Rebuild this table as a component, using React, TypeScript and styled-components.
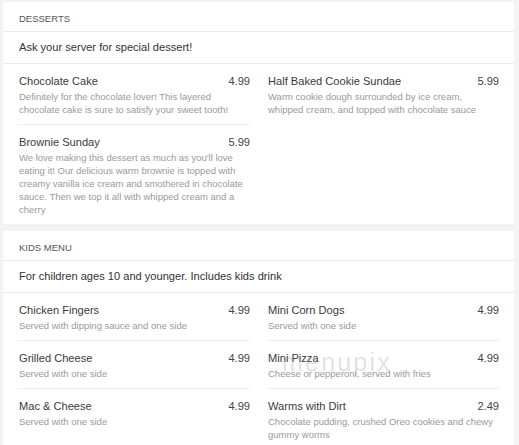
import React from "react";
import styled, { createGlobalStyle } from "styled-components";

const GlobalStyle = createGlobalStyle`
  html, body {
    margin: 0;
    padding: 0;
    background: #f3f3f5;
    font-family: "Liberation Sans", Arial, sans-serif;
  }
`;

const Page = styled.div`
  padding: 2px 5px 0 3px;
  display: flex;
  flex-direction: column;
  gap: 7px;
`;

const Card = styled.section`
  position: relative;
  background: #ffffff;
`;

const Header = styled.div`
  height: 30px;
  padding: 10px 15px 0 16px;
  box-sizing: border-box;
  font-size: 9.5px;
  line-height: 13px;
  color: #555;
  text-transform: uppercase;
  border-bottom: 1px solid #ececef;
`;

const Intro = styled.div`
  padding: 7px 15px 8px 16px;
  font-size: 11.1px;
  line-height: 16px;
  color: #333;
  border-bottom: 1px solid #ececef;
`;

const Columns = styled.div`
  display: grid;
  grid-template-columns: 232px 232px;
  column-gap: 17px;
  padding: 0 15px;
  align-items: start;
`;

const Column = styled.div`
  display: flex;
  flex-direction: column;
`;

const Item = styled.div`
  padding: 9px 0 8px 1px;
  & + & {
    border-top: 1px solid #efeff1;
  }
`;

const TitleRow = styled.div`
  display: flex;
  justify-content: space-between;
  font-size: 11.1px;
  line-height: 16px;
  color: #3a3a3a;
`;

const Price = styled.span`
  color: #444;
`;

const Desc = styled.div`
  margin-top: 1px;
  font-size: 9.5px;
  line-height: 13px;
  color: #9a9a9a;
`;

const Watermark = styled.div`
  position: absolute;
  left: 279px;
  top: 117px;
  font-size: 25px;
  line-height: 28px;
  letter-spacing: 2.2px;
  color: rgba(150, 150, 150, 0.28);
  pointer-events: none;
`;

type MenuItem = { name: string; price: string; desc: string };

const desserts: MenuItem[][] = [
  [
    {
      name: "Chocolate Cake",
      price: "4.99",
      desc: "Definitely for the chocolate lover! This layered chocolate cake is sure to satisfy your sweet tooth!",
    },
    {
      name: "Brownie Sunday",
      price: "5.99",
      desc: "We love making this dessert as much as you'll love eating it! Our delicious warm brownie is topped with creamy vanilla ice cream and smothered in chocolate sauce. Then we top it all with whipped cream and a cherry",
    },
  ],
  [
    {
      name: "Half Baked Cookie Sundae",
      price: "5.99",
      desc: "Warm cookie dough surrounded by ice cream, whipped cream, and topped with chocolate sauce",
    },
  ],
];

const kids: MenuItem[][] = [
  [
    { name: "Chicken Fingers", price: "4.99", desc: "Served with dipping sauce and one side" },
    { name: "Grilled Cheese", price: "4.99", desc: "Served with one side" },
    { name: "Mac & Cheese", price: "4.99", desc: "Served with one side" },
  ],
  [
    { name: "Mini Corn Dogs", price: "4.99", desc: "Served with one side" },
    { name: "Mini Pizza", price: "4.99", desc: "Cheese or pepperoni, served with fries" },
    {
      name: "Warms with Dirt",
      price: "2.49",
      desc: "Chocolate pudding, crushed Oreo cookies and chewy gummy worms",
    },
  ],
];

const Section: React.FC<{
  title: string;
  intro: string;
  columns: MenuItem[][];
  watermark?: boolean;
}> = ({ title, intro, columns, watermark }) => (
  <Card>
    <Header>{title}</Header>
    <Intro>{intro}</Intro>
    <Columns>
      {columns.map((col, ci) => (
        <Column key={ci}>
          {col.map((it) => (
            <Item key={it.name}>
              <TitleRow>
                <span>{it.name}</span>
                <Price>{it.price}</Price>
              </TitleRow>
              <Desc>{it.desc}</Desc>
            </Item>
          ))}
        </Column>
      ))}
    </Columns>
    {watermark && <Watermark>menupix</Watermark>}
  </Card>
);

export default function App() {
  return (
    <>
      <GlobalStyle />
      <Page>
        <Section title="Desserts" intro="Ask your server for special dessert!" columns={desserts} />
        <Section
          title="Kids Menu"
          intro="For children ages 10 and younger. Includes kids drink"
          columns={kids}
          watermark
        />
      </Page>
    </>
  );
}
